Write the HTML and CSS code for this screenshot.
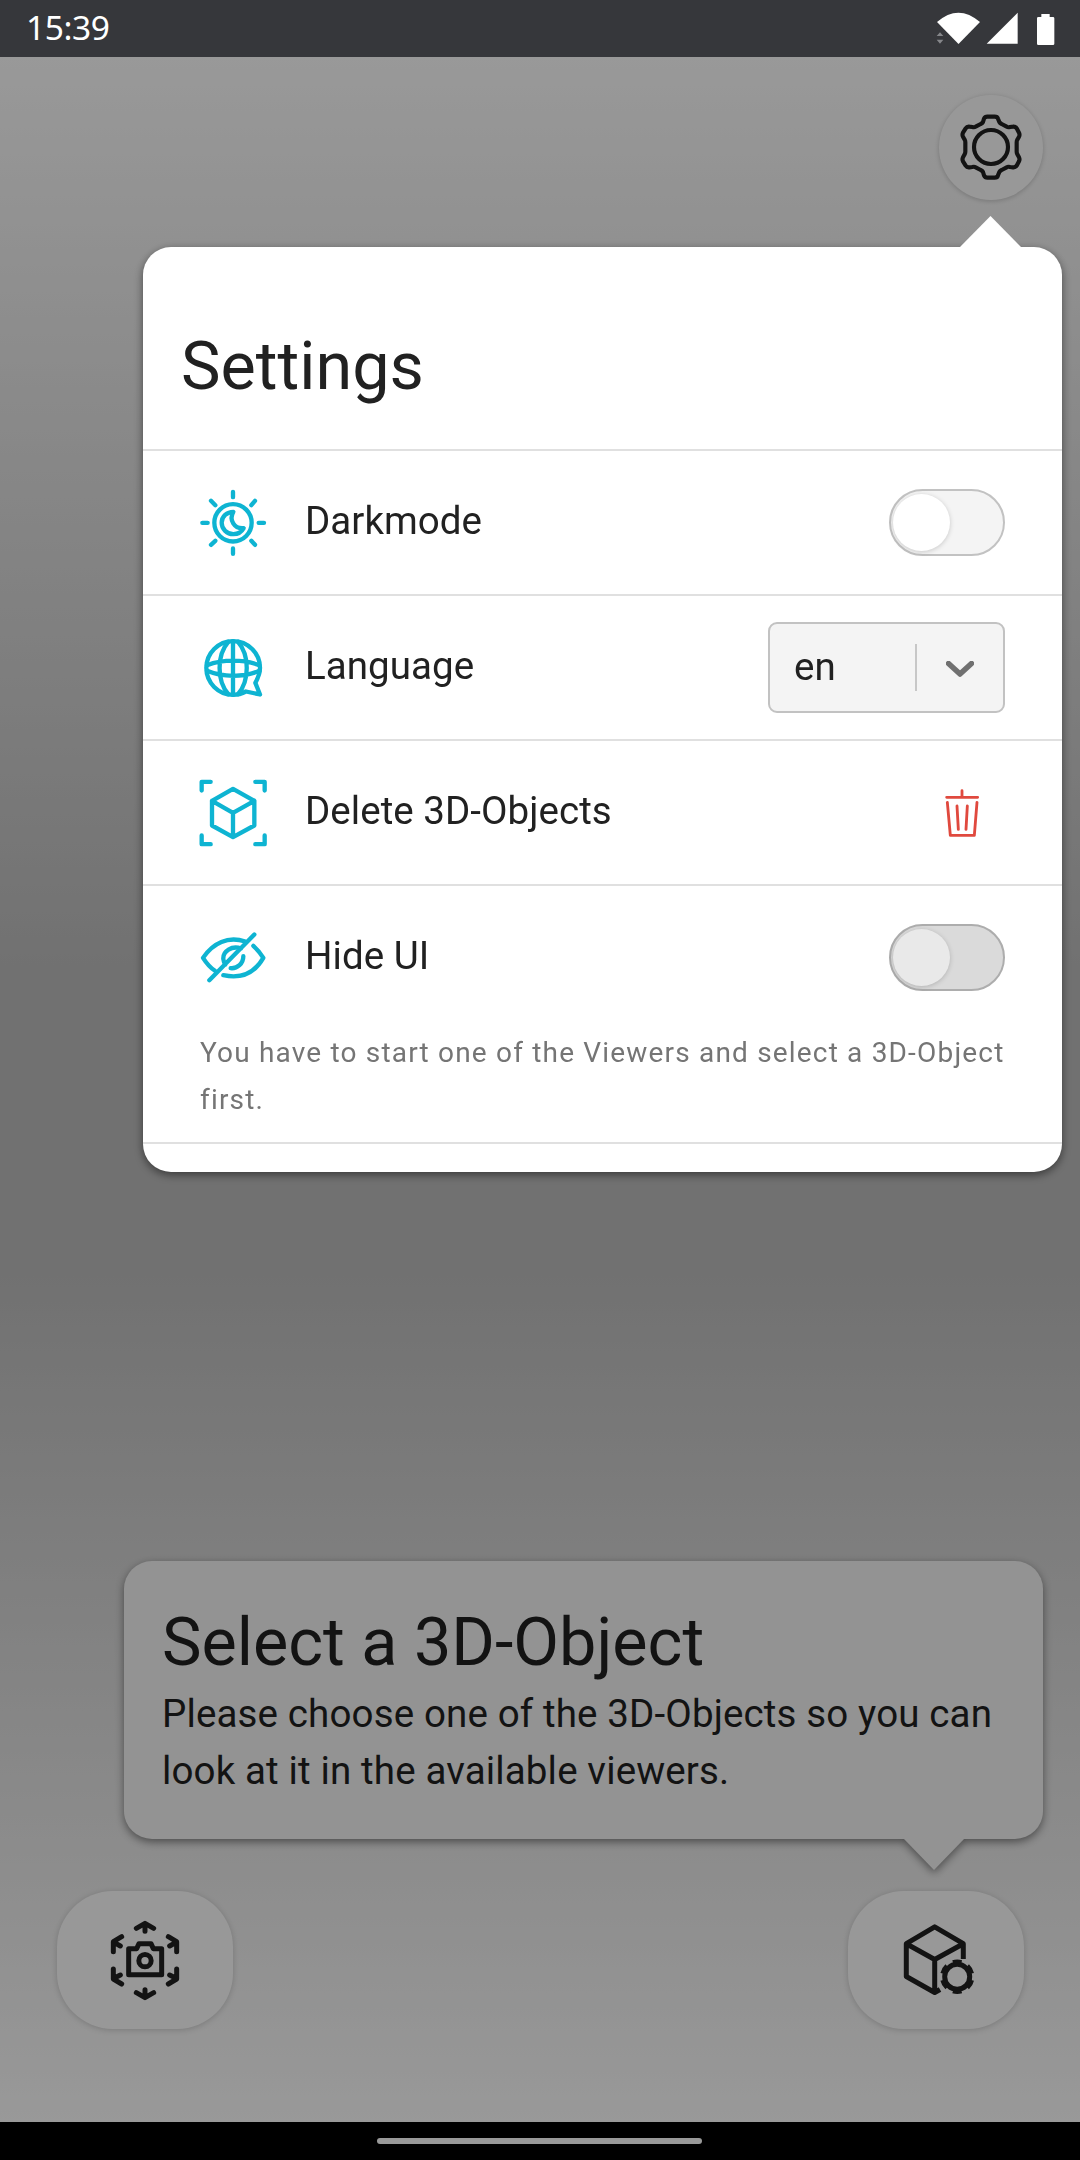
FILE: index.html
```
<!DOCTYPE html>
<html lang="en">
<head>
<meta charset="utf-8">
<title>3D-Object Viewer</title>
<link rel="stylesheet" href="styles.css">
</head>
<body>
<header class="status">
  <span class="clock">15:39</span>
  <svg class="status-icons" width="120" height="34" viewBox="168 36 360 102" fill="#fff">
    <path d="M171 66Q235 10 300 66L235.500 132Z"/>
    <path d="M180 97L190 108H170ZM170 119H190L180 131Z" fill="#85868a"/>
    <path d="M413 38V131H320Z"/>
    <path d="M484 42H509V51H519Q523 51 523 55V131Q523 135 519 135H475Q471 135 471 131V55Q471 51 475 51H484Z"/>
  </svg>
</header>

<main class="screen">
  <div class="topbar">
    <button class="round" aria-label="Settings">
      <svg width="68" height="68" viewBox="231 340 204 204" fill="none" stroke="#212121" stroke-width="12.500" stroke-linejoin="round">
        <circle cx="333" cy="442" r="51"/>
        <path d="M322 351H344Q352 351 354 357L358 367Q360 371 365 373L380 381Q384 384 390 382L399 381Q406 380 410 386L417 399Q420 405 417 411L412 420Q410 423 410 428V456Q410 460 412 464L417 473Q420 479 417 485L410 498Q406 504 399 503L390 502Q384 500 380 503L365 511Q360 513 358 517L354 527Q352 534 344 534H322Q315 534 312 527L309 517Q307 513 302 511L287 503Q283 500 277 502L268 503Q261 504 257 498L249 485Q246 479 249 473L254 464Q256 460 256 456V428Q256 423 254 420L249 411Q246 405 249 399L257 386Q261 380 268 381L277 382Q283 384 287 381L302 373Q307 371 309 367L312 357Q315 351 322 351Z"/>
      </svg>
    </button>
  </div>

  <section class="hint">
    <h2>Select a 3D-Object</h2>
    <p>Please choose one of the 3D-Objects so you can<br>look at it in the available viewers.</p>
  </section>

  <footer class="actions">
    <button class="pill" aria-label="Capture">
      <svg width="84" height="84" viewBox="309 234 252 252" fill="none" stroke="#212121" stroke-width="15" stroke-linecap="round" stroke-linejoin="round">
        <path d="M386 326H410L417 311H453L460 326H485V404H386Z"/>
        <circle cx="435" cy="362" r="18.500"/>
        <path d="M409 265L435 250L461 265M435 252V274"/>
        <path d="M409 458L435 473L461 458M435 471V449"/>
        <path d="M365 290L340 305V335M342 307L361 318M505 290L530 305V335M528 307L509 318M365 432L340 417V387M342 415L361 405M505 432L530 417V387M528 415L509 405"/>
      </svg>
    </button>
    <button class="pill" aria-label="Object settings">
      <svg width="84" height="84" viewBox="894 1918 84 84" fill="none" stroke="#212121" stroke-width="5" stroke-linejoin="round">
        <path d="M963.300 1959V1943.700L934.700 1926.800L906.300 1943.700V1976.500L934.700 1992.500L940 1989.500M906.300 1943.700L934.700 1959.500L963.300 1943.700M934.700 1959.500V1992.500"/>
        <circle cx="957.200" cy="1976.800" r="12.500" stroke-width="5"/>
        <circle cx="957.200" cy="1976.800" r="15.200" stroke-width="4" pathLength="60" stroke-dasharray="5.600 4.400" stroke-dashoffset="-2.200"/>
      </svg>
    </button>
  </footer>
</main>

<div class="scrim"></div>

<section class="settings">
  <h1>Settings</h1>
  <div class="row">
    <svg class="icon" viewBox="178 775.500 204 204">
      <circle cx="280" cy="877" r="56"/>
      <path d="M281 844C262 844 246 858 246 877C246 896 262 911 281 911C296 911 307 902 312 893C284 896 267 868 281 844Z"/>
      <path d="M280 784V800M280 954V970M188 877H204M357 877H373M214 811L227 824M346 811L335 824M214 943L227 931M346 943L335 931"/>
    </svg>
    <span class="label">Darkmode</span>
    <span class="toggle"><i></i></span>
  </div>
  <div class="row">
    <svg class="icon" viewBox="178 40.500 204 204">
      <path d="M361 222L319 213C306 220 293 223 280 223C236 223 200 187 200 142C200 98 236 62 280 62C325 62 361 98 361 142C361 158 355 173 347 187Z"/>
      <path d="M280 62V223M266 64C231 104 231 180 266 221M295 64C330 104 330 180 295 221M202 134C250 116 311 116 359 134M202 151C250 171 311 171 359 151"/>
    </svg>
    <span class="label">Language</span>
    <span class="select">
      <span class="value">en</span>
      <svg class="chevron" width="28" height="16" viewBox="0 0 28 16"><path d="M2.500 2.500L14 13L25.500 2.500"/></svg>
    </span>
  </div>
  <div class="row">
    <svg class="icon" viewBox="178 475.500 204 204">
      <path d="M280 505L344 541V615L280 650L217 615V541ZM217 541L280 577L344 541M280 577V650M186 510V484H213M347 484H375V510M186 645V671H213M347 671H375V645"/>
    </svg>
    <span class="label">Delete 3D-Objects</span>
    <svg class="trash" width="40" height="50" viewBox="607 143 120 150">
      <path d="M667 151V171M621 171H714M623 186L632 285H704L712 186M652 197L656 267M683 197L679 267"/>
    </svg>
  </div>
  <div class="row">
    <svg class="icon" viewBox="178 910.500 204 204">
      <path d="M344 942L209 1079M317 963C265 946 220 967 190 1012C201 1029 211 1041 225 1050M251 1064C305 1076 344 1059 371 1012C361 996 352 986 341 976M304 984C277 974 249 992 251 1016Q252 1026 257 1032M273 1043C293 1045 311 1029 311 1007"/>
    </svg>
    <span class="label">Hide UI</span>
    <span class="toggle off"><i></i></span>
  </div>
  <p class="note">You have to start one of the Viewers and select a 3D-Object first.</p>
</section>

<nav class="navbar"><span class="handle"></span></nav>
</body>
</html>
```
FILE: styles.css
```
* { box-sizing: border-box; }
body {
  margin: 0;
  width: 1080px;
  height: 2160px;
  display: flex;
  flex-direction: column;
  position: relative;
  overflow: hidden;
  font-family: Roboto, sans-serif;
  color: #212121;
}
h1, h2, p { margin: 0; font-weight: 400; }
button { border: 0; padding: 0; display: flex; align-items: center; justify-content: center; background: #fefefe; }
svg { display: block; flex: none; }

.status {
  height: 57px;
  flex: none;
  background: #36373b;
  color: #fff;
  display: flex;
  justify-content: space-between;
  padding: 0 24px 0 26px;
}
.clock { font: 33.500px/55px "Noto Sans", sans-serif; letter-spacing: -0.400px; }
.status-icons { margin-top: 12px; }

.screen {
  flex: 1;
  display: flex;
  flex-direction: column;
  background: linear-gradient(#fff 0%, #bdbdbd 44%, #bdbdbd 59%, #fff 100%);
}
.topbar { display: flex; justify-content: flex-end; padding: 37.500px 37px 0 0; }
.round {
  width: 104px;
  height: 105.500px;
  border-radius: 50%;
  box-shadow: 0 1px 5px rgba(0, 0, 0, .2);
}
.hint {
  width: 919px;
  height: 278px;
  margin: auto 37px 0 auto;
  padding: 42px 20px 0 38px;
  border-radius: 28px;
  background: #f5f5f5;
  position: relative;
  filter: drop-shadow(0 3px 4px rgba(0, 0, 0, .45));
}
.hint::after {
  content: "";
  position: absolute;
  left: 779px;
  top: 277px;
  width: 62px;
  height: 32px;
  background: inherit;
  clip-path: polygon(0 0, 100% 0, 50% 100%);
}
.hint h2 { font-size: 66.500px; line-height: 78px; }
.hint p { margin-top: 4px; font-size: 38.500px; line-height: 57px; letter-spacing: 0.140px; white-space: nowrap; }
.actions { display: flex; justify-content: space-between; padding: 52px 56px 93px 57px; }
.pill {
  width: 176px;
  height: 138px;
  border-radius: 56px;
  box-shadow: 0 1px 6px rgba(0, 0, 0, .18);
}

.scrim { position: absolute; top: 57px; left: 0; right: 0; bottom: 38px; background: rgba(0, 0, 0, .4); }

.settings {
  position: absolute;
  left: 143px;
  top: 247px;
  width: 919px;
  height: 925px;
  border-radius: 28px;
  background: #fff;
  box-shadow: 0 3px 10px rgba(0, 0, 0, .5);
}
.settings::before {
  content: "";
  position: absolute;
  left: 816px;
  top: -31px;
  width: 63px;
  height: 32px;
  background: #fff;
  clip-path: polygon(50% 0, 100% 100%, 0 100%);
}
.settings h1 { font-size: 66.500px; line-height: 78px; padding: 80px 38px 44px; }
.row {
  height: 145px;
  border-top: 2px solid #e0e0e0;
  display: flex;
  align-items: center;
  padding: 0 57px 0 56px;
}
.icon {
  width: 68px;
  height: 68px;
  fill: none;
  stroke: #0eb4d2;
  stroke-width: 13px;
  stroke-linecap: round;
  stroke-linejoin: round;
}
.label { font-size: 38.500px; line-height: 50px; margin: -4px auto 0 38px; letter-spacing: 0.050px; }
.toggle {
  width: 116px;
  height: 67px;
  border: 2px solid #c2c2c2;
  border-radius: 34px;
  background: #f4f4f4;
  display: flex;
  align-items: center;
  padding-left: 2px;
}
.toggle i {
  width: 57px;
  height: 57px;
  border-radius: 50%;
  background: #fff;
  box-shadow: 0 1px 5px rgba(0, 0, 0, .18);
}
.toggle.off { background: #dadada; border-color: #adadad; }
.toggle.off i { background: #e9e9e9; }
.select {
  width: 237px;
  height: 91px;
  border: 2px solid #c2c2c2;
  border-radius: 9px;
  background: #f4f4f4;
  display: flex;
  align-items: center;
}
.value {
  width: 147px;
  height: 47px;
  border-right: 2px solid #c7c7c7;
  padding-left: 24px;
  font-size: 38.500px;
  line-height: 45px;
}
.chevron { margin: 3px 0 0 29px; fill: none; stroke: #707070; stroke-width: 5.500; stroke-linecap: round; stroke-linejoin: round; }
.trash { margin-right: 23px; fill: none; stroke: #e0493e; stroke-width: 8.500; stroke-linecap: round; stroke-linejoin: round; }
.note {
  height: 115px;
  padding: 0 40px 0 57px;
  border-bottom: 2px solid #e0e0e0;
  font-size: 28px;
  line-height: 47px;
  letter-spacing: 1.180px;
  color: #757575;
}

.navbar { height: 38px; flex: none; background: #000; display: flex; justify-content: center; padding: 16px 1px 0 0; }
.handle { width: 325px; height: 6px; border-radius: 3px; background: #999; }
```
